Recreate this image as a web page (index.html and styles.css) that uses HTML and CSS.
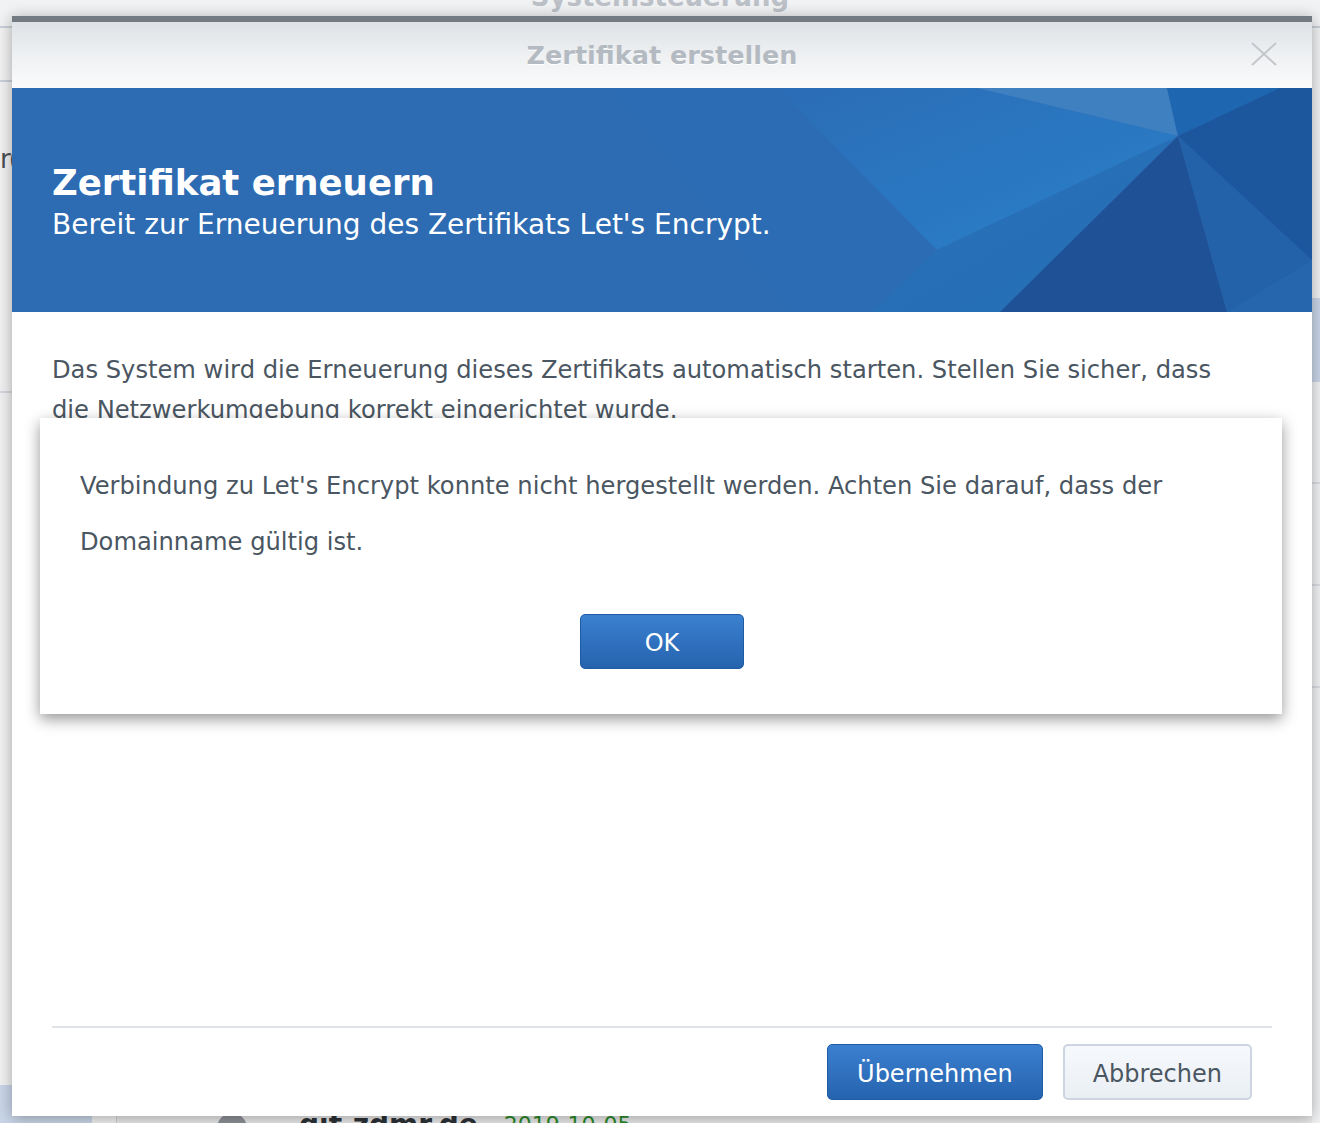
FILE: index.html
```html
<!DOCTYPE html>
<html lang="de">
<head>
<meta charset="utf-8">
<title>Zertifikat erstellen</title>
<link rel="stylesheet" href="styles.css">
</head>
<body>
<div class="desk">
  <div class="bg-window">
    <div class="bg-title"><div class="bg-title-text">Systemsteuerung</div></div>
    <div class="bg-body">
      <div class="bg-side">
        <div class="bg-side-row"></div>
        <div class="bg-side-row bg-side-text">r(</div>
        <div class="bg-side-fill"></div>
        <div class="bg-side-sel"></div>
      </div>
      <div class="bg-main">
        <div class="bg-main-fill"></div>
        <div class="bg-row">
          <span class="bg-dot"></span>
          <span class="bg-host">git.zdmr.de</span>
          <span class="bg-date">2019-10-05</span>
        </div>
      </div>
      <div class="bg-right">
        <div class="bg-right-top"></div>
        <div class="bg-right-sel"></div>
        <div class="bg-right-row"></div>
        <div class="bg-right-row"></div>
        <div class="bg-right-row"></div>
      </div>
    </div>
  </div>

  <div class="dialog">
    <div class="dlg-head">
      <div class="dlg-title">Zertifikat erstellen</div>
      <svg class="dlg-close" width="26" height="24" viewBox="0 0 26 24"><path d="M1 1 L25 23 M25 1 L1 23" stroke="#c3c7cc" stroke-width="2" fill="none"/></svg>
    </div>
    <div class="banner">
      <svg class="banner-art" width="1300" height="224" viewBox="0 0 1300 224" preserveAspectRatio="none">
        <defs>
          <linearGradient id="gLight" x1="0" y1="0" x2="1" y2="1">
            <stop offset="0" stop-color="#2b6db6"/>
            <stop offset="0.6" stop-color="#2a78c2"/>
            <stop offset="1" stop-color="#2a82ca"/>
          </linearGradient>
          <linearGradient id="gMid" x1="0" y1="0" x2="1" y2="1">
            <stop offset="0" stop-color="#2a6fb7"/>
            <stop offset="1" stop-color="#2470b8"/>
          </linearGradient>
        </defs>
        <polygon points="600,0 765,0 925,162 860,224 780,224" fill="#2b6cb4"/>
        <polygon points="765,0 965,0 1166,48 925,162" fill="url(#gLight)"/>
        <polygon points="965,0 1155,0 1166,48" fill="#3f80c1"/>
        <polygon points="925,162 1166,48 988,224 860,224" fill="url(#gMid)"/>
        <polygon points="988,224 1166,48 1215,224" fill="#1f5196"/>
        <polygon points="1166,48 1300,172 1300,224 1215,224" fill="#2361a8"/>
        <polygon points="1215,224 1300,172 1300,224" fill="#2566ad"/>
        <polygon points="1155,0 1268,0 1166,48" fill="#1f66b0"/>
        <polygon points="1268,0 1300,0 1300,172 1166,48" fill="#1c569c"/>
      </svg>
      <div class="banner-text">
        <div class="banner-title">Zertifikat erneuern</div>
        <div class="banner-sub">Bereit zur Erneuerung des Zertifikats Let's Encrypt.</div>
      </div>
    </div>
    <div class="dlg-body">
      <p class="dlg-text">Das System wird die Erneuerung dieses Zertifikats automatisch starten. Stellen Sie sicher, dass die Netzwerkumgebung korrekt eingerichtet wurde.</p>
    </div>
    <div class="dlg-foot">
      <button class="btn btn-primary">Übernehmen</button>
      <button class="btn btn-default">Abbrechen</button>
    </div>

    <div class="alert">
      <p class="alert-text">Verbindung zu Let's Encrypt konnte nicht hergestellt werden. Achten Sie darauf, dass der Domainname gültig ist.</p>
      <div class="alert-actions">
        <button class="btn btn-primary btn-ok">OK</button>
      </div>
    </div>
  </div>
</div>
</body>
</html>
```

FILE: styles.css
```css
* { box-sizing: border-box; }
html, body { margin: 0; padding: 0; }
body {
  font-family: "DejaVu Sans", Verdana, sans-serif;
  background: #eff0f2;
  width: 1320px;
  height: 1123px;
  overflow: hidden;
}
.desk {
  position: relative;
  width: 1320px;
  height: 1123px;
  overflow: hidden;
  background: #eff0f2;
}

/* background window */
.bg-window {
  height: 100%;
  display: flex;
  flex-direction: column;
}
.bg-title {
  height: 28px;
  border-bottom: 2px solid #c9d0d9;
  text-align: center;
  background: #f1f2f4;
}
.bg-title-text {
  margin-top: -18px;
  line-height: 30px;
  font-size: 26px;
  font-weight: bold;
  color: #bcc1c8;
}
.bg-body {
  flex: 1;
  display: flex;
}
.bg-side {
  width: 117px;
  display: flex;
  flex-direction: column;
  border-right: 1px solid #cfd3d8;
  background: #f1f1f2;
}
.bg-side-row {
  height: 54px;
  border-bottom: 2px solid #c9d0d9;
}
.bg-side-text {
  height: 311px;
  padding-top: 64px;
  padding-left: 0;
  font-size: 26px;
  color: #4a4f55;
  line-height: 1;
  letter-spacing: -2px;
  border-bottom: 2px solid #d4d9df;
}
.bg-side-fill { flex: 1; }
.bg-side-sel {
  height: 38px;
  background: #c9d6e8;
  width: 92px;
}
.bg-main {
  flex: 1;
  display: flex;
  flex-direction: column;
  background: #ffffff;
}
.bg-main-fill { flex: 1; }
.bg-row {
  height: 16px;
  display: flex;
  align-items: flex-start;
  gap: 26px;
  padding-left: 100px;
  overflow: hidden;
  background: #e9e9e9;
}
.bg-dot {
  width: 30px;
  height: 30px;
  border-radius: 50%;
  background: #8d9298;
  margin-top: 6px;
}
.bg-host {
  font-size: 28px;
  font-weight: bold;
  color: #2c3136;
  line-height: 28px;
  margin-left: 26px;
  margin-top: 4px;
}
.bg-date {
  font-size: 22px;
  color: #2a8a2a;
  line-height: 28px;
  margin-top: 4px;
}
.bg-right {
  width: 8px;
  display: flex;
  flex-direction: column;
  background: #f1f2f4;
}
.bg-right-top { height: 270px; }
.bg-right-sel { height: 84px; background: #c9d6e8; }
.bg-right-row { height: 102px; border-bottom: 2px solid #d9dde2; }

/* dialog window */
.dialog {
  position: absolute;
  left: 12px;
  top: 16px;
  width: 1300px;
  height: 1100px;
  background: #ffffff;
  border-top: 6px solid #737a82;
  box-shadow: 0 2px 14px rgba(0, 0, 0, 0.32);
  display: flex;
  flex-direction: column;
}
.dlg-head {
  height: 66px;
  flex: none;
  display: flex;
  align-items: center;
  justify-content: center;
  position: relative;
  background: linear-gradient(to bottom, #dee2e6 0%, #eef0f2 50%, #fbfbfc 100%);
}
.dlg-title {
  font-size: 25.5px;
  font-weight: bold;
  color: #b4bac1;
  text-shadow: 0 1px 0 #ffffff;
}
.dlg-close {
  position: absolute;
  right: 35px;
  top: 20px;
}
.banner {
  height: 224px;
  flex: none;
  position: relative;
  background: #2d6bb3;
  overflow: hidden;
}
.banner-art {
  position: absolute;
  left: 0;
  top: 0;
}
.banner-text {
  position: relative;
  padding: 74px 0 0 40px;
  color: #ffffff;
}
.banner-title {
  font-size: 35.5px;
  font-weight: bold;
  line-height: 42px;
}
.banner-sub {
  font-size: 28px;
  line-height: 34px;
  margin-top: 4px;
}
.dlg-body {
  flex: 1;
  padding: 38px 70px 0 40px;
}
.dlg-text {
  margin: 0;
  font-size: 24.2px;
  line-height: 40px;
  color: #4a5661;
}
.dlg-foot {
  flex: none;
  margin: 0 40px;
  border-top: 2px solid #dfe2e6;
  padding: 16px 20px 16px 0;
  display: flex;
  justify-content: flex-end;
  gap: 20px;
}
.btn {
  height: 56px;
  padding: 3px 29px 0;
  font-family: "DejaVu Sans", Verdana, sans-serif;
  font-size: 24px;
  border-radius: 5px;
  cursor: pointer;
  line-height: 1;
}
.btn-primary {
  color: #ffffff;
  background: linear-gradient(to bottom, #3b80d0 0%, #2563ae 100%);
  border: 1px solid #1f5ba3;
}
.btn-default {
  color: #4a5661;
  padding: 3px 28px 0;
  background: linear-gradient(to bottom, #f6f9fc 0%, #eaeff4 100%);
  border: 2px solid #cdd6e0;
}

/* alert */
.alert {
  position: absolute;
  left: 28px;
  top: 396px;
  width: 1242px;
  height: 296px;
  background: #ffffff;
  box-shadow: 0 5px 14px rgba(0, 0, 0, 0.42);
  padding: 40px 40px 0 40px;
  display: flex;
  flex-direction: column;
}
.alert-text {
  margin: 0;
  font-size: 24.2px;
  line-height: 56px;
  color: #4a5661;
}
.alert-actions {
  margin-top: 44px;
  display: flex;
  justify-content: center;
}
.btn-ok {
  width: 164px;
  height: 55px;
  padding: 3px 0 0;
  margin-left: 2px;
}
```
